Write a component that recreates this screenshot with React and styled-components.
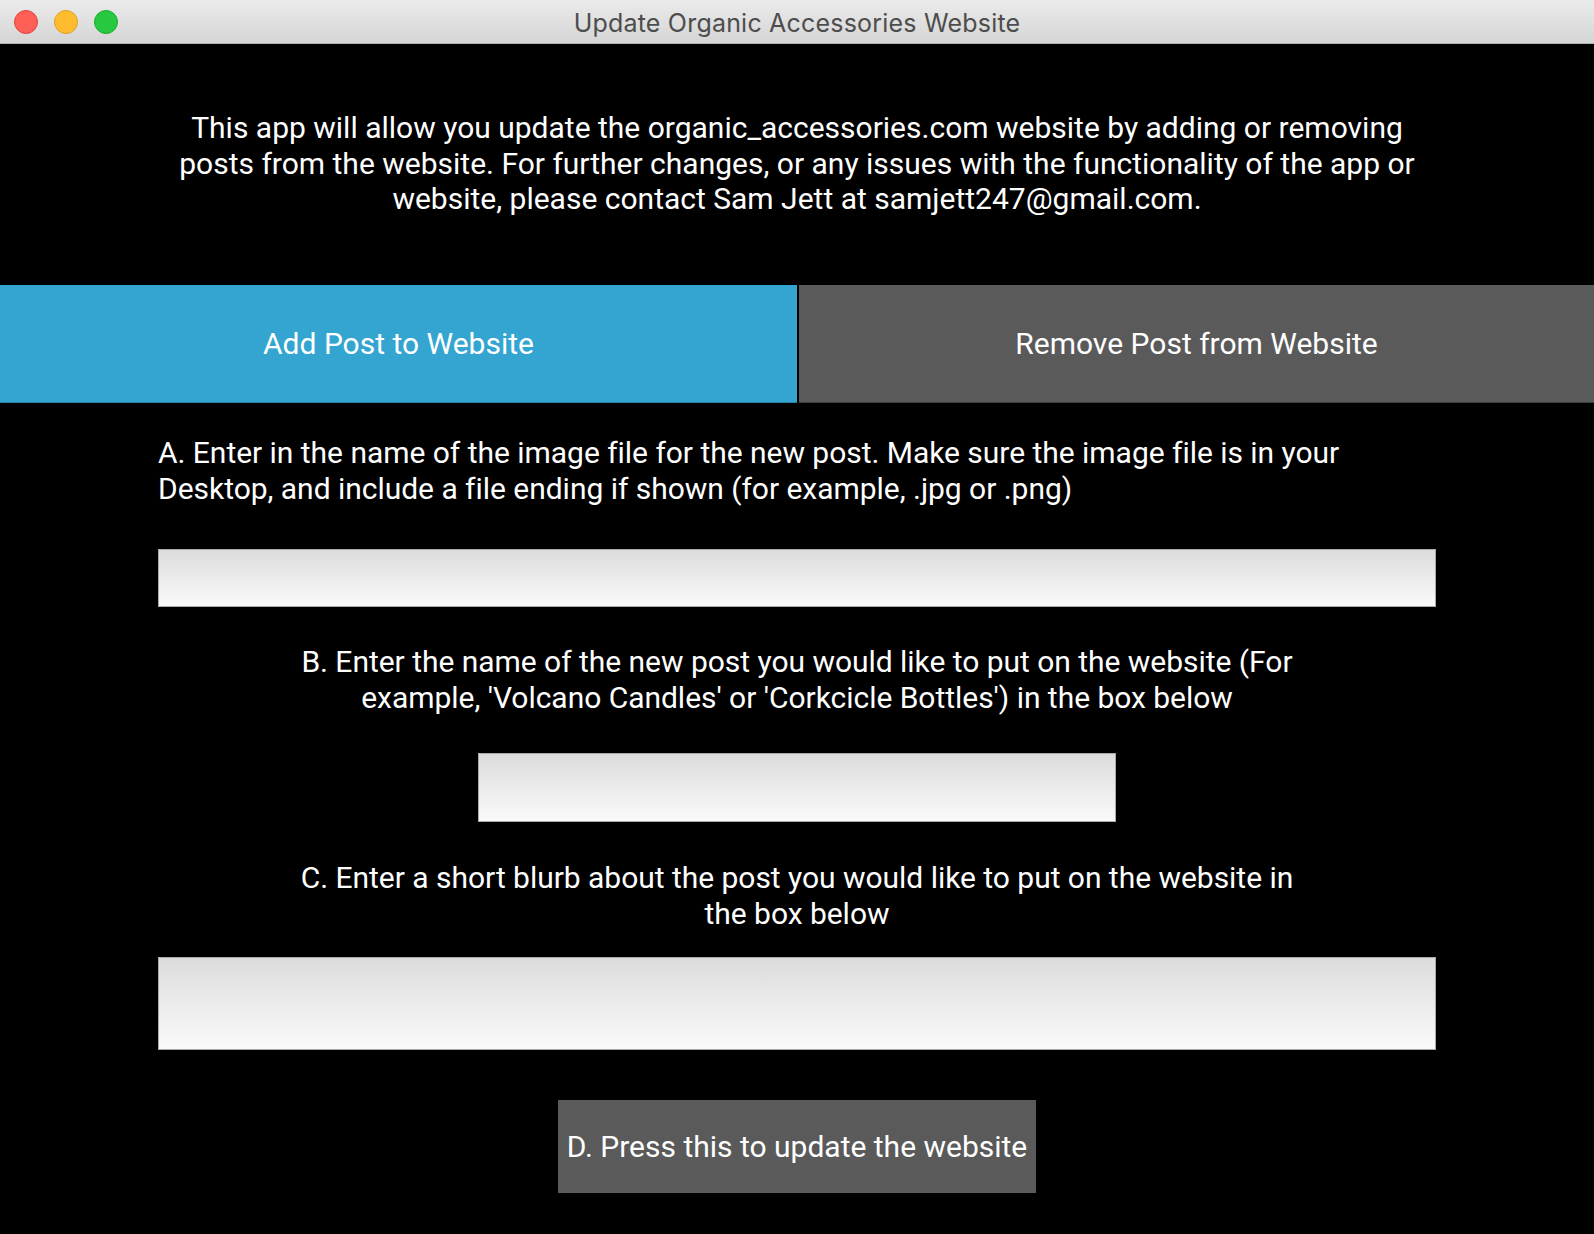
import React from "react";
import styled, { createGlobalStyle } from "styled-components";

const Global = createGlobalStyle`
  html, body { margin: 0; padding: 0; background: #000; }
  body { width: 1594px; height: 1234px; overflow: hidden; }
  * { box-sizing: border-box; }
`;

const Window = styled.div`
  width: 1594px;
  height: 1234px;
  display: flex;
  flex-direction: column;
  background: #000;
  font-family: Roboto, "Liberation Sans", sans-serif;
  color: #fff;
`;

const TitleBar = styled.div`
  position: relative;
  height: 44px;
  flex: none;
  display: flex;
  align-items: center;
  justify-content: center;
  padding-top: 3px;
  background: linear-gradient(#ebebeb, #d5d5d5);
  border-bottom: 1px solid #b4b4b4;
`;

const Lights = styled.div`
  position: absolute;
  left: 14px;
  top: 10px;
  display: flex;
  gap: 16px;
`;

const Light = styled.span`
  width: 24px;
  height: 24px;
  border-radius: 50%;
  background: ${(p) => p.$c};
  border: 1px solid ${(p) => p.$b};
`;

const Title = styled.div`
  font-family: Inter, "Noto Sans", sans-serif;
  font-size: 25px;
  color: #4d4d4d;
  letter-spacing: 0.2px;
`;

const Content = styled.div`
  display: flex;
  flex-direction: column;
  align-items: center;
`;

const Intro = styled.p`
  margin: 66px 0 0;
  width: 1240px;
  text-align: center;
  font-size: 30px;
  line-height: 35.5px;
`;

const Tabs = styled.div`
  margin-top: 68px;
  width: 100%;
  height: 118px;
  display: grid;
  grid-template-columns: 797px 1fr;
  gap: 2px;
`;

const Tab = styled.div`
  display: flex;
  align-items: center;
  justify-content: center;
  font-size: 30px;
  background: ${(p) => (p.$active ? "#33a5d0" : "#5a5a5a")};
  border-bottom: 1px solid ${(p) => (p.$active ? "#2a86a8" : "#3f3f3f")};
`;

const Prompt = styled.p`
  margin: ${(p) => p.$mt}px 0 0;
  width: ${(p) => p.$w}px;
  text-align: ${(p) => p.$align || "center"};
  font-size: 30px;
  line-height: 36px;
  letter-spacing: -0.03px;
`;

const Field = styled.div`
  margin-top: ${(p) => p.$mt}px;
  width: ${(p) => p.$w}px;
  height: ${(p) => p.$h}px;
  background: linear-gradient(#dcdcdc, #fafafa);
  border: 1px solid #a8a8a8;
`;

const Submit = styled.div`
  margin-top: 50px;
  width: 478px;
  height: 93px;
  display: flex;
  align-items: center;
  justify-content: center;
  background: #5a5a5a;
  font-size: 30px;
  white-space: nowrap;
`;

export default function App() {
  return (
    <>
      <Global />
      <Window>
        <TitleBar>
          <Lights>
            <Light $c="#fe5f57" $b="#e0443e" />
            <Light $c="#febc2e" $b="#dea123" />
            <Light $c="#28c840" $b="#1aab29" />
          </Lights>
          <Title>Update Organic Accessories Website</Title>
        </TitleBar>
        <Content>
          <Intro>
            This app will allow you update the organic_accessories.com website by adding or removing
            posts from the website. For further changes, or any issues with the functionality of the app or
            website, please contact Sam Jett at samjett247@gmail.com.
          </Intro>
          <Tabs>
            <Tab $active>Add Post to Website</Tab>
            <Tab>Remove Post from Website</Tab>
          </Tabs>
          <Prompt $mt={32} $w={1278} $align="left">
            A. Enter in the name of the image file for the new post. Make sure the image file is in your
            Desktop, and include a file ending if shown (for example, .jpg or .png)
          </Prompt>
          <Field $mt={42} $w={1278} $h={58} />
          <Prompt $mt={37} $w={1000}>
            B. Enter the name of the new post you would like to put on the website (For
            example, 'Volcano Candles' or 'Corkcicle Bottles') in the box below
          </Prompt>
          <Field $mt={37} $w={638} $h={69} />
          <Prompt $mt={38} $w={1000}>
            C. Enter a short blurb about the post you would like to put on the website in
            the box below
          </Prompt>
          <Field $mt={25} $w={1278} $h={93} />
          <Submit>D. Press this to update the website</Submit>
        </Content>
      </Window>
    </>
  );
}
